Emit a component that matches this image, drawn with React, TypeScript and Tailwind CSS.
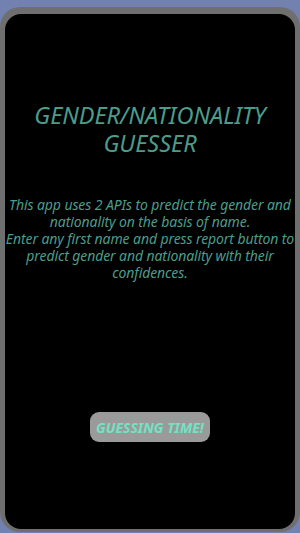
export default function App() {
  return (
    <div className="h-[533px] w-[300px] overflow-hidden bg-[#7381b0] pt-[7px]">
      <div className="h-[525px] rounded-[20px] bg-[#6f6f6f] px-[5px] pb-[3px] pt-[7px]">
        <div
          className="flex h-full flex-col items-center rounded-[16px] bg-black text-center italic text-[#4d9c8b]"
          style={{ fontFamily: '"Noto Sans", "Open Sans", sans-serif' }}
        >
          <h1 className="mt-[87px] text-[23.5px] leading-[28px]">
            GENDER/NATIONALITY
            <br />
            GUESSER
          </h1>
          <p className="mt-[39px] text-[14px] leading-[17px] tracking-[-0.1px]">
            This app uses 2 APIs to predict the gender and nationality on the basis of name.
            <br />
            Enter any first name and press report button to predict gender and nationality with their
            confidences.
          </p>
          <button className="mt-[131px] h-[30px] rounded-[9px] bg-[#9a9a9a] px-[6px] text-[14px] font-bold italic text-[#72e3c2]">
            GUESSING TIME!
          </button>
        </div>
      </div>
    </div>
  )
}
